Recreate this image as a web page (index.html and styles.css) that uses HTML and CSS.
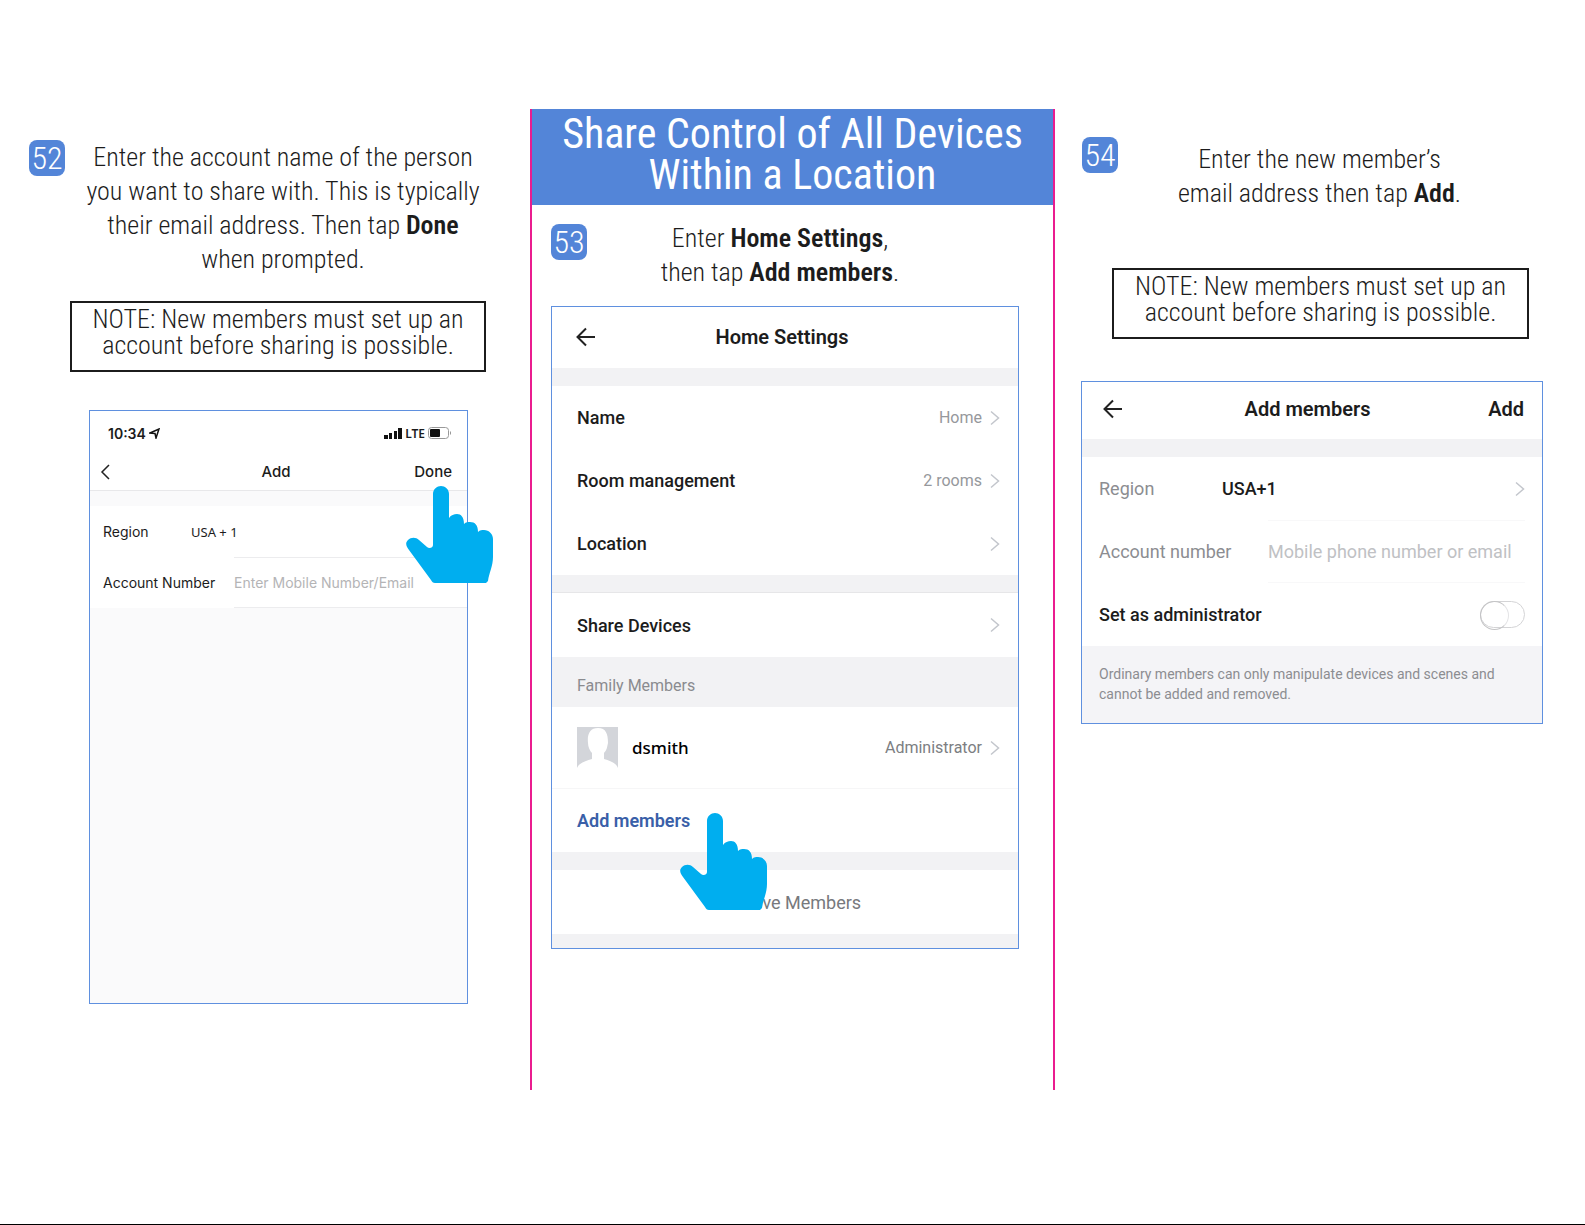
FILE: index.html
```html
<!DOCTYPE html>
<html lang="en">
<head>
    <meta charset="UTF-8">
    <title>Share Control of All Devices Within a Location</title>
    <link rel="stylesheet" href="styles.css">
</head>
<body>
    <svg width="0" height="0" class="symbols" aria-hidden="true">
        <symbol id="hand" viewBox="0 0 87 97">
            <path fill="#00aeef" d="M27 8C27 3 31 0 35 0s8 3 8 8v24c2-3 5-4 8-4 4 0 7 3 7 10 2-2 4-2 6-2 5 0 8 3 8 10 2-2 4-2 6-2 5 0 9 4 9 9v18c0 9-4 16-5 24l-2 2H29c-2 0-3-1-4-3L3 64C0 60-1 57 2 54c3-3 8-3 11 0l8 7c2 2 6 1 6-2z"/>
        </symbol>
        <symbol id="arrow" viewBox="0 0 20 20">
            <path fill="none" stroke="#222" stroke-width="2" d="M19 10H2M10 1.500L1.500 10l8.500 8.500"/>
        </symbol>
        <symbol id="chevron" viewBox="0 0 10 16">
            <path fill="none" stroke="#c3c6cc" stroke-width="1.500" d="M1 1.500L8.500 8 1 14.500"/>
        </symbol>
    </svg>

    <main class="page">
        <section class="column first">
            <div class="step">
                <span class="number">52</span>
                <p>Enter the account name of the person<br>you want to share with. This is typically<br>their email address. Then tap <b>Done</b><br>when prompted.</p>
            </div>
            <p class="note">NOTE: New members must set up an<br>account before sharing is possible.</p>

            <div class="phone ios">
                <div class="status">
                    <span class="time">10:34
                        <svg width="11" height="11" viewBox="0 0 11 11"><path d="M1 5L10 1 7 10 6 5.500z" fill="none" stroke="#111" stroke-width="1.500"/></svg>
                    </span>
                    <span class="signal">
                        <svg width="18" height="11" viewBox="0 0 18 11"><path d="M0 7h4v4H0zM5 5h3v6H5zM10 3h3v8h-3zM14 0h4v11h-4z" fill="#111"/></svg>
                        LTE
                        <svg width="24" height="12" viewBox="0 0 24 12"><rect x=".5" y=".5" width="20" height="11" rx="3" fill="#fff" stroke="#999"/><rect x="2" y="2" width="10" height="8" rx="1" fill="#111"/><path d="M22 4v4l1-1V5z" fill="#999"/></svg>
                    </span>
                </div>
                <div class="bar">
                    <button class="back" aria-label="Back"><svg width="10" height="16" viewBox="0 0 10 16"><path d="M9 1L2 8l7 7" fill="none" stroke="#222" stroke-width="1.500"/></svg></button>
                    <h2>Add</h2>
                    <button class="action">Done</button>
                </div>
                <div class="fields">
                    <div class="row"><span class="label">Region</span><span class="value">USA + 1</span></div>
                    <div class="row"><label class="label" for="account1">Account Number</label><input id="account1" type="text" placeholder="Enter Mobile Number/Email"></div>
                </div>
                <svg class="hand"><use href="#hand"/></svg>
            </div>
        </section>

        <section class="column middle">
            <h1>Share Control of All Devices<br>Within a Location</h1>
            <div class="step">
                <span class="number">53</span>
                <p>Enter <b>Home Settings</b>,<br>then tap <b>Add members</b>.</p>
            </div>

            <div class="phone home">
                <div class="bar">
                    <button class="back" aria-label="Back"><svg width="20" height="20"><use href="#arrow"/></svg></button>
                    <h2>Home Settings</h2>
                </div>
                <div class="gap"></div>
                <a href="#" class="row">Name<span class="value">Home</span><svg class="chevron"><use href="#chevron"/></svg></a>
                <a href="#" class="row">Room management<span class="value">2 rooms</span><svg class="chevron"><use href="#chevron"/></svg></a>
                <a href="#" class="row">Location<span class="value"></span><svg class="chevron"><use href="#chevron"/></svg></a>
                <div class="gap line"></div>
                <a href="#" class="row share">Share Devices<span class="value"></span><svg class="chevron"><use href="#chevron"/></svg></a>
                <h3>Family Members</h3>
                <a href="#" class="row member">
                    <svg class="avatar" viewBox="0 0 41 41"><path fill="#d3d5da" d="M0 0h41v41c-2-5-7-7-14-9v-6c3-3 3-6 4-10C31 7 29 1 21 1S10 7 11 16c0 4 2 8 4 10v6C8 34 2 36 0 41z"/></svg>
                    <span class="name">dsmith</span><span class="value admin">Administrator</span><svg class="chevron"><use href="#chevron"/></svg>
                </a>
                <button class="row add">Add members</button>
                <div class="gap"></div>
                <button class="row remove">Remove Members</button>
                <div class="gap last"></div>
                <svg class="hand"><use href="#hand"/></svg>
            </div>
        </section>

        <section class="column third">
            <div class="step">
                <span class="number">54</span>
                <p>Enter the new member’s<br>email address then tap <b>Add</b>.</p>
            </div>
            <p class="note">NOTE: New members must set up an<br>account before sharing is possible.</p>

            <div class="phone members">
                <div class="bar">
                    <button class="back" aria-label="Back"><svg width="20" height="20"><use href="#arrow"/></svg></button>
                    <h2>Add members</h2>
                    <button class="action">Add</button>
                </div>
                <div class="gap"></div>
                <a href="#" class="row"><span class="label">Region</span><span class="region">USA+1</span><svg class="chevron"><use href="#chevron"/></svg></a>
                <div class="row"><label class="label" for="account2">Account number</label><input id="account2" type="text" placeholder="Mobile phone number or email"></div>
                <div class="row"><label for="admin">Set as administrator</label><input id="admin" class="toggle" type="checkbox"></div>
                <p class="hint">Ordinary members can only manipulate devices and scenes and cannot be added and removed.</p>
            </div>
        </section>
    </main>
</body>
</html>
```
FILE: styles.css
```css
* {
    box-sizing: border-box;
}

body {
    font-family: "Roboto Condensed", "Liberation Sans Narrow", "Liberation Sans", sans-serif;
    background-color: #FFFFFF;
    color: #1c1c1c;
    margin: 0;
    min-height: 100vh;
    padding: 109px 0 134px;
    border-bottom: 1px solid #000;
}

h1, h2, h3, p {
    margin: 0;
    font-weight: normal;
}

a {
    color: inherit;
    text-decoration: none;
}

button, input {
    font: inherit;
    color: inherit;
    background: none;
    border: 0;
    padding: 0;
    margin: 0;
}

button {
    cursor: pointer;
}

.symbols {
    position: absolute;
}

.page {
    display: grid;
    grid-template-columns: 530fr 525fr 530fr;
    min-height: 981px;
}

.middle {
    border-left: 2px solid #ea1c8f;
    border-right: 2px solid #ea1c8f;
}

.first {
    padding-top: 31px;
}

.third {
    padding-top: 28px;
}

h1 {
    background-color: #5385d8;
    color: white;
    font-size: 42px;
    line-height: 41px;
    text-align: center;
    padding: 4px 0 10px;
}

/* step number and text */
.step {
    display: flex;
    align-items: flex-start;
}

.first .step {
    padding: 0 29px;
}

.middle .step {
    padding: 19px 80px 0 19px;
}

.third .step {
    padding: 0 64px 0 27px;
    min-height: 131px;
}

.number {
    width: 36px;
    height: 36px;
    line-height: 36px;
    border-radius: 8px;
    background-color: #5385d8;
    color: white;
    font-size: 32px;
    font-weight: 300;
    text-align: center;
}

.step p {
    flex: 1;
    font-size: 26px;
    font-weight: 300;
    line-height: 34px;
    text-align: center;
}

.step b {
    font-weight: 600;
}

.middle .step p {
    margin-top: -3px;
}

.third .step p {
    margin-top: 5px;
}

.note {
    border: 2px solid #1c1c1c;
    font-size: 26px;
    font-weight: 300;
    line-height: 26px;
    text-align: center;
    height: 71px;
    padding-top: 3px;
}

.first .note {
    margin: 25px 44px 38px 70px;
}

.third .note {
    margin: 0 56px 42px 57px;
}

/* phone screens */
.phone {
    position: relative;
    border: 1px solid #5f90df;
    background-color: white;
    font-family: Roboto, sans-serif;
    font-size: 18px;
    font-weight: 500;
}

.bar {
    display: grid;
    grid-template-columns: 1fr auto 1fr;
    align-items: center;
}

.back {
    justify-self: start;
}

.back svg {
    display: block;
}

.action {
    justify-self: end;
}

.row {
    display: flex;
    align-items: center;
    width: 100%;
    height: 63px;
    padding: 0 18px 0 25px;
}

.gap {
    height: 18px;
    background-color: #f2f2f4;
}

.gap.line {
    border-bottom: 1px solid #e6e6e8;
}

.chevron {
    width: 10px;
    height: 16px;
    margin-left: 8px;
}

.value {
    margin-left: auto;
    font-size: 16px;
    font-weight: 400;
    color: #96989c;
}

.hand {
    position: absolute;
    width: 87px;
    height: 97px;
    pointer-events: none;
}

input::placeholder {
    color: #b4b4b6;
    opacity: 1;
}

.ios {
    margin: 0 62px 0 89px;
    min-height: 594px;
    background-color: #fafafb;
    font-family: Inter, sans-serif;
    font-size: 14px;
    font-weight: 400;
}

.status {
    display: flex;
    justify-content: space-between;
    align-items: center;
    height: 44px;
    padding: 0 15px 0 18px;
    background-color: white;
    font-weight: 600;
}

.signal {
    display: flex;
    align-items: center;
    gap: 3px;
    font-family: "Noto Sans", sans-serif;
    font-size: 12px;
}

.ios .bar {
    height: 36px;
    padding: 0 15px 2px 10px;
    background-color: white;
    border-bottom: 1px solid #e8e8ea;
    font-weight: 500;
}

.ios h2, .ios .action {
    font-size: 15px;
    font-weight: 500;
}

.fields {
    margin-top: 15px;
    background-color: white;
}

.ios .row {
    height: 51px;
    padding: 0 0 0 13px;
}

.ios .value {
    margin: 0;
    font-family: "Noto Sans", sans-serif;
    font-size: 13px;
    color: #1c1c1c;
}

.ios .row span.label {
    width: 88px;
}

.ios .row label {
    width: 131px;
}

.ios input {
    flex: 1;
    min-width: 0;
    height: 51px;
    border-top: 1px solid #ececee;
    border-bottom: 1px solid #ececee;
}

.ios .hand {
    right: -26px;
    top: 75px;
}

.home {
    margin: 17px 34px 0 19px;
}

.home .bar {
    height: 61px;
    padding: 0 30px 2px 24px;
}

.phone h2 {
    text-align: center;
}

.home h2, .members h2, .members .action {
    font-size: 20px;
    font-weight: 600;
}

h3 {
    height: 50px;
    padding: 0 25px;
    background-color: #f2f2f4;
    font-size: 16px;
    line-height: 58px;
    color: #8a8b8f;
}

.home .share, .home .add, .home .remove {
    height: 64px;
}

.home .member {
    height: 81px;
}

.avatar {
    width: 41px;
    height: 41px;
    margin-right: 14px;
}

.name {
    font-family: "Noto Sans", sans-serif;
    font-size: 17px;
    color: #000;
}

.admin {
    color: #7c7e82;
}

.home .add {
    border-top: 1px solid #f6f6f7;
    color: #3a5fa8;
    font-weight: 600;
}

.home .remove {
    justify-content: center;
    color: #77797d;
    font-weight: 400;
}

.gap.last {
    height: 14px;
}

.home .hand {
    left: 128px;
    top: 506px;
}

.members {
    margin: 0 42px 0 26px;
}

.members .bar {
    height: 57px;
    padding: 0 18px 4px 21px;
}

.members h2 {
    padding-right: 12px;
}

.members .row {
    padding: 0 17px;
}

.members .label {
    color: #8c8d91;
    font-weight: 400;
}

.members span.label {
    width: 123px;
}

.members label.label {
    width: 169px;
}

.members .chevron {
    margin-left: auto;
}

.members input[type="text"] {
    flex: 1;
    min-width: 0;
    height: 63px;
    border-top: 1px solid #f8f8f9;
    border-bottom: 1px solid #f8f8f9;
    font-weight: 400;
}

.members input::placeholder {
    color: #c0c1c4;
}

.toggle {
    appearance: none;
    width: 45px;
    height: 27px;
    margin-left: auto;
    border: 1px solid #d4d4d6;
    border-radius: 14px;
}

.toggle::before {
    content: "";
    display: block;
    width: 27px;
    height: 27px;
    margin: -1px;
    border: 1px solid #c4c4c6;
    border-right-color: #e4e4e6;
    border-radius: 50%;
}

.hint {
    height: 77px;
    padding: 18px 25px 0 17px;
    background-color: #f4f4f7;
    color: #8c8d91;
    font-size: 14px;
    line-height: 20px;
    font-weight: 400;
}
```
